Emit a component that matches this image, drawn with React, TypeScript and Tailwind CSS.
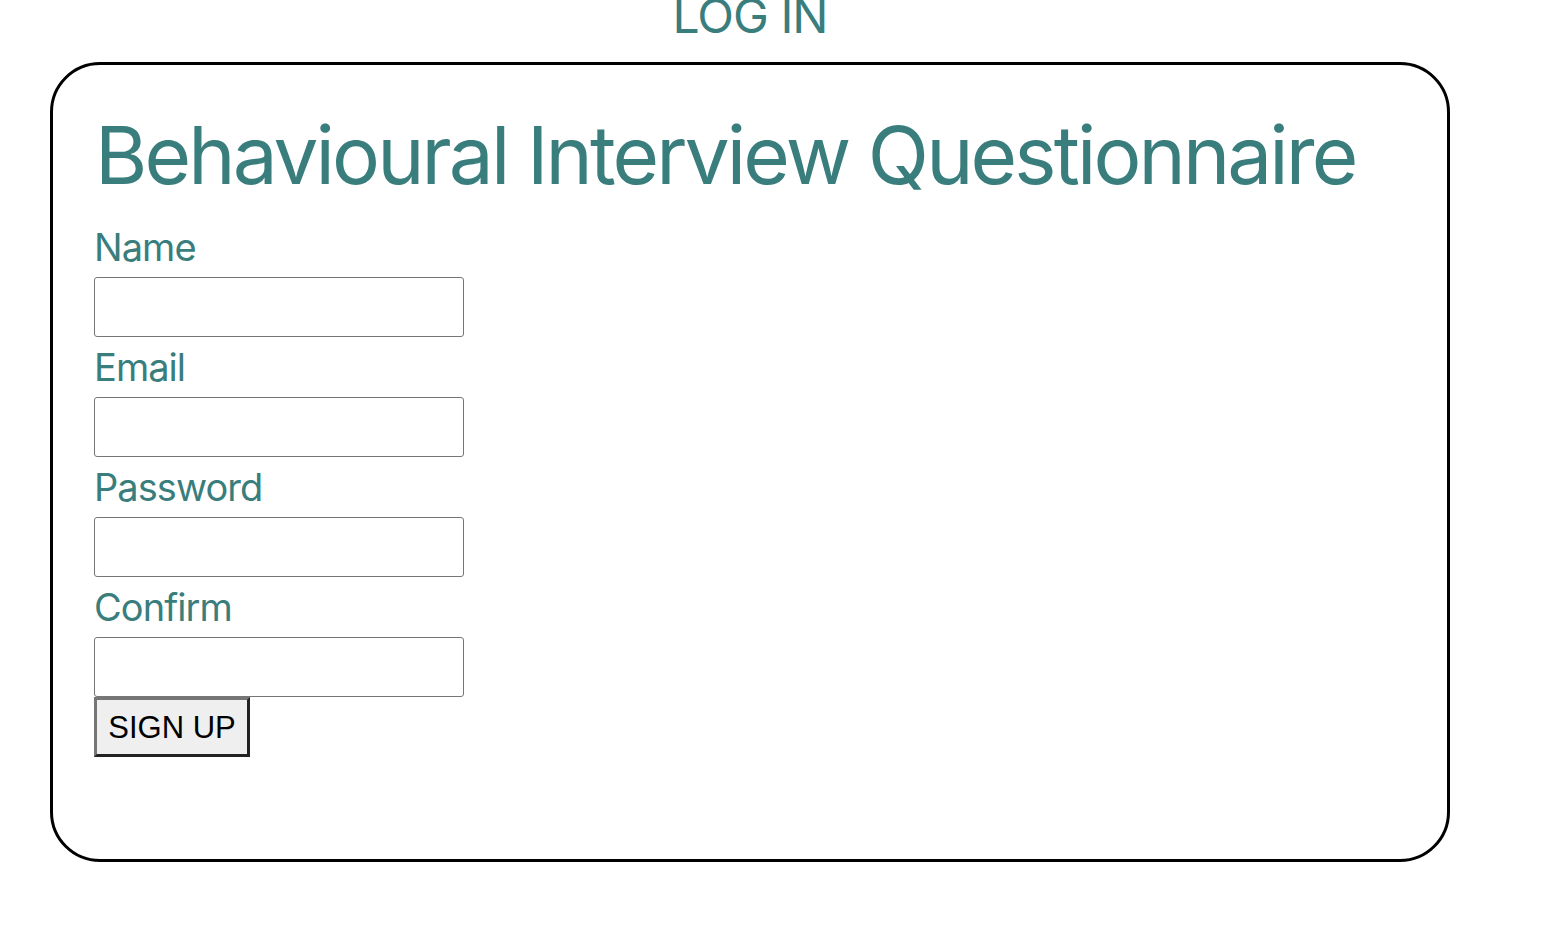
export default function App() {
  const fields = ["Name", "Email", "Password", "Confirm"];
  return (
    <div className="min-h-screen bg-white font-['Inter',sans-serif]">
      <div className="ml-[50px] w-[1400px]">
        <div className="text-center text-[48px] leading-[58px] -mt-[13px] text-[#397e7d] tracking-[-0.02em]">LOG IN</div>
        <div className="mt-[17px] h-[800px] rounded-[50px] border-[3px] border-black pl-[41px] pr-[20px] pt-[40px]">
          <h1 className="whitespace-nowrap pl-[1px] text-[80px] leading-[100px] tracking-[-0.036em] text-[#397e7d]">
            Behavioural Interview Questionnaire
          </h1>
          <form className="mt-[12px] flex flex-col">
            {fields.map((f) => (
              <div key={f} className="flex flex-col">
                <label className="text-[38px] leading-[60px] tracking-[-0.025em] text-[#397e7d]">{f}</label>
                <input
                  type={f === "Password" || f === "Confirm" ? "password" : "text"}
                  className="h-[60px] w-[370px] rounded-[3px] border border-[#767676] bg-white"
                />
              </div>
            ))}
            <button
              type="button"
              className="h-[60px] w-[156px] border-[3px] border-[#767676] border-r-[#222] border-b-[#222] bg-[#efefef] pt-[2px] font-['Liberation_Sans',Arial,sans-serif] text-[31px] text-black"
            >
              SIGN UP
            </button>
          </form>
        </div>
      </div>
    </div>
  );
}
